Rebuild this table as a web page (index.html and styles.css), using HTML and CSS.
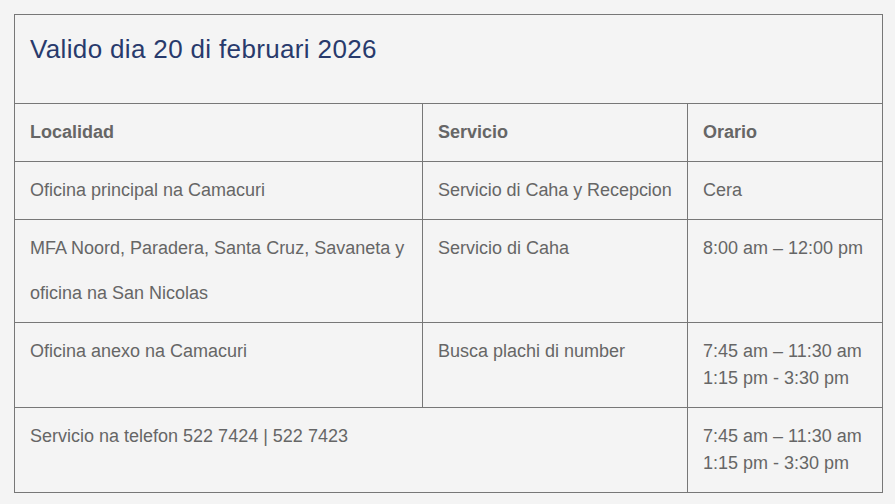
FILE: index.html
```html
<!DOCTYPE html>
<html lang="pap">
<head>
<meta charset="utf-8">
<title>Orario</title>
<link rel="stylesheet" href="styles.css">
</head>
<body>
<div class="page">
  <table class="schedule">
    <colgroup>
      <col class="c-loc">
      <col class="c-srv">
      <col class="c-time">
    </colgroup>
    <thead>
      <tr>
        <th colspan="3" class="title-cell"><h2 class="title">Valido dia 20 di februari 2026</h2></th>
      </tr>
      <tr class="head">
        <th>Localidad</th>
        <th>Servicio</th>
        <th>Orario</th>
      </tr>
    </thead>
    <tbody>
      <tr>
        <td>Oficina principal na Camacuri</td>
        <td class="nowrap">Servicio di Caha y Recepcion</td>
        <td>Cera</td>
      </tr>
      <tr>
        <td><span class="line">MFA Noord, Paradera, Santa Cruz, Savaneta y</span><span class="line gap">oficina na San Nicolas</span></td>
        <td>Servicio di Caha</td>
        <td>8:00 am – 12:00 pm</td>
      </tr>
      <tr>
        <td>Oficina anexo na Camacuri</td>
        <td>Busca plachi di number</td>
        <td>7:45 am – 11:30 am<br>1:15 pm - 3:30 pm</td>
      </tr>
      <tr>
        <td colspan="2">Servicio na telefon 522 7424 | 522 7423</td>
        <td>7:45 am – 11:30 am<br>1:15 pm - 3:30 pm</td>
      </tr>
    </tbody>
  </table>
</div>
</body>
</html>
```
FILE: styles.css
```css
html, body {
  margin: 0;
  padding: 0;
  background: #f4f4f4;
}
.page {
  padding: 14px;
}
.schedule {
  border-collapse: collapse;
  table-layout: fixed;
  width: 868px;
  font-family: "Liberation Sans", Arial, sans-serif;
  font-size: 18px;
  line-height: 27px;
  color: #666666;
}
.c-loc { width: 408px; }
.c-srv { width: 265px; }
.c-time { width: 195px; }
.schedule th,
.schedule td {
  border: 1px solid #777777;
  padding: 15px;
  text-align: left;
  vertical-align: top;
}
.schedule th {
  font-weight: bold;
}
.title-cell {
  font-weight: normal;
}
.title {
  margin: 4px 0 23px;
  font-size: 26px;
  line-height: 31px;
  letter-spacing: 0.35px;
  font-weight: normal;
  color: #283a6c;
}
.nowrap {
  white-space: nowrap;
  letter-spacing: -0.05px;
}
.line {
  display: block;
}
.line.gap {
  margin-top: 18px;
}
```
